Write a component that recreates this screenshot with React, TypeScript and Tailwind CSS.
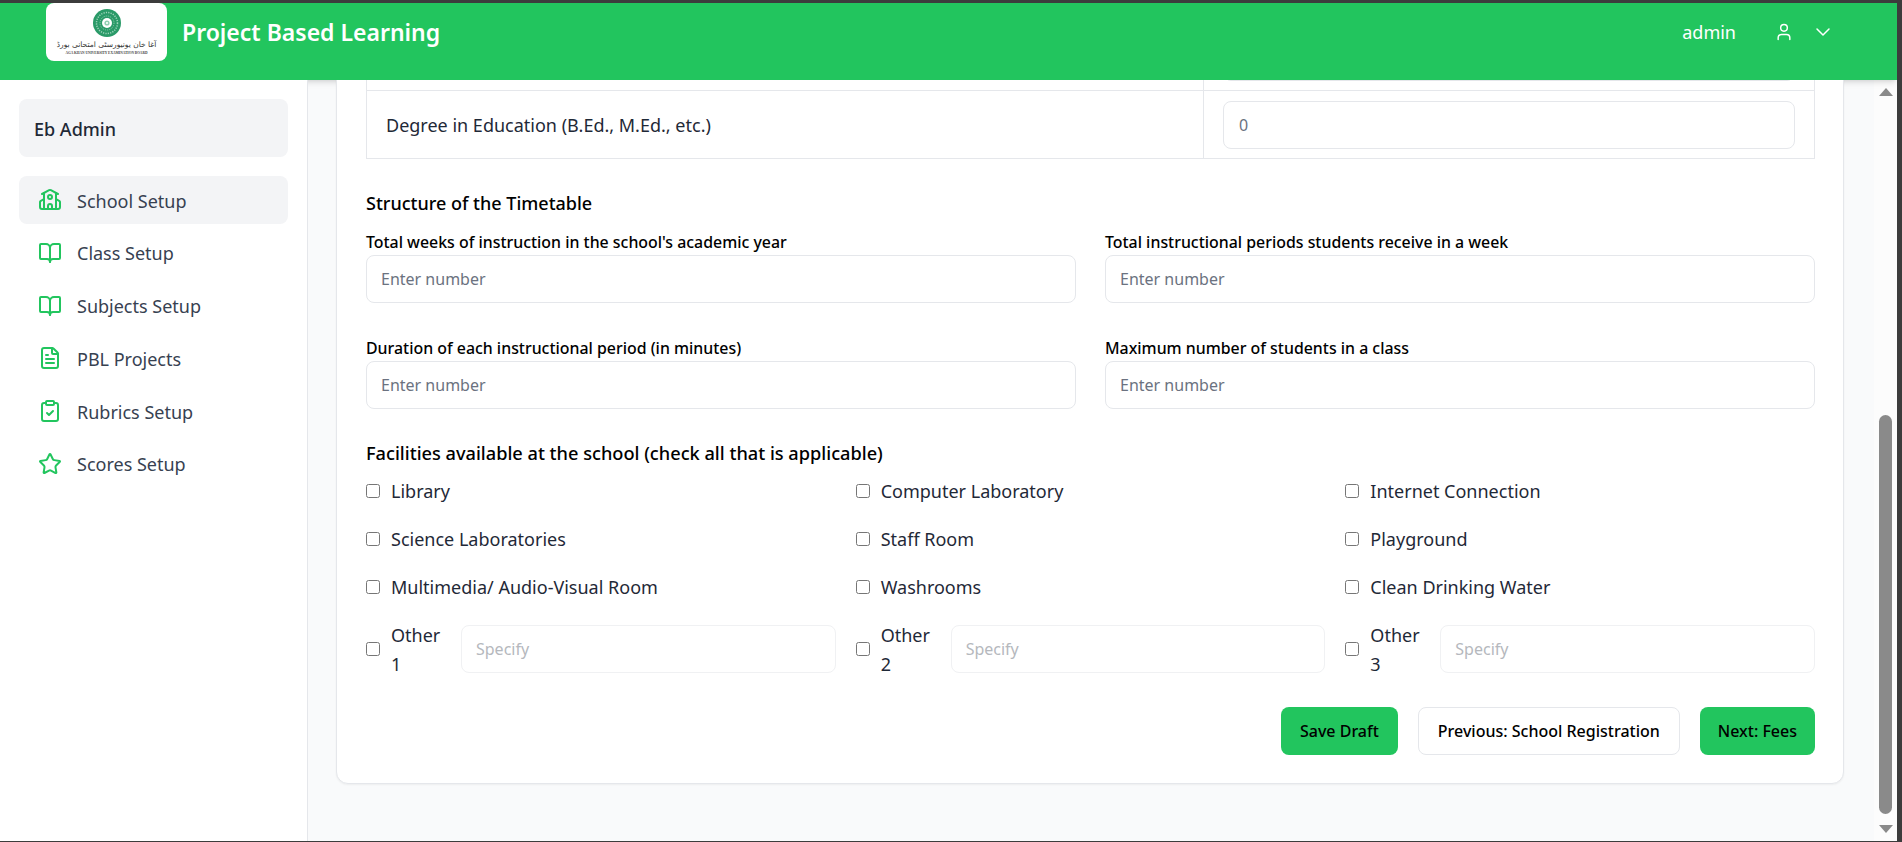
import { BookOpen, ChevronDown, ClipboardCheck, FileText, School, Star, User } from 'lucide-react';

const navItems = [
  { label: 'School Setup', icon: School, active: true },
  { label: 'Class Setup', icon: BookOpen },
  { label: 'Subjects Setup', icon: BookOpen },
  { label: 'PBL Projects', icon: FileText },
  { label: 'Rubrics Setup', icon: ClipboardCheck },
  { label: 'Scores Setup', icon: Star },
];

const facilityRows = [
  ['Library', 'Computer Laboratory', 'Internet Connection'],
  ['Science Laboratories', 'Staff Room', 'Playground'],
  ['Multimedia/ Audio-Visual Room', 'Washrooms', 'Clean Drinking Water'],
];

function Logo() {
  return (
    <div className="flex h-[58px] w-[121px] flex-col items-center overflow-hidden rounded-lg bg-white pt-[6px]">
      <svg width="28" height="28" viewBox="0 0 28 28" className="shrink-0">
        <circle cx="14" cy="14" r="14" fill="#2a9a68" />
        <circle cx="14" cy="14" r="10.5" fill="none" stroke="#9fd4bb" strokeWidth="1.5" strokeDasharray="1.2 1.2" />
        <circle cx="14" cy="14" r="7" fill="none" stroke="#8ccbae" strokeWidth="1" strokeDasharray="1 1" />
        <circle cx="14" cy="14" r="5" fill="#fff" />
        <circle cx="14" cy="14" r="2.6" fill="#8fcfb2" />
        <circle cx="14" cy="14" r="1.1" fill="#fff" />
      </svg>
      <div dir="rtl" className="mt-[2px] font-['DejaVu_Sans'] text-[7.5px] leading-[11px] whitespace-nowrap text-[#333]">
        آغا خان یونیورسٹی امتحانی بورڈ
      </div>
      <div className="font-['Liberation_Serif'] text-[3.5px] leading-[6px] font-bold whitespace-nowrap text-[#444]">
        AGA KHAN UNIVERSITY EXAMINATION BOARD
      </div>
    </div>
  );
}

function NumberField({ label }: { label: string }) {
  return (
    <div>
      <label className="mb-[3px] block text-[15.9px] leading-[20px] font-medium text-black">{label}</label>
      <input
        placeholder="Enter number"
        className="h-[48px] w-full rounded-lg border border-[#e5e7eb] bg-white px-[14px] text-[16px] placeholder:text-[#6b7280]"
      />
    </div>
  );
}

export default function App() {
  return (
    <div className="flex h-[842px] w-[1902px] flex-col overflow-hidden border-t-[3px] border-r-[5px] border-b border-[#3c3c3c] bg-white font-['Noto_Sans',sans-serif]">
      {/* Header */}
      <header className="relative z-10 flex h-[77px] shrink-0 items-start justify-between bg-[#22c55e] pr-[62px] pl-[46px] text-white shadow-md">
        <div className="flex items-center gap-[15px]">
          <Logo />
          <span className="text-[23px] leading-[58px] font-semibold">Project Based Learning</span>
        </div>
        <div className="flex h-[58px] items-center">
          <span className="mr-[38px] text-[18px]">admin</span>
          <User size={20} strokeWidth={1.75} className="mr-[17px]" />
          <ChevronDown size={24} strokeWidth={1.5} />
        </div>
      </header>

      <div className="flex min-h-0 flex-1">
        {/* Sidebar */}
        <aside className="relative z-20 w-[308px] shrink-0 border-r border-[#e5e7eb] bg-white px-[19px] pt-[19px]">
          <div className="mb-[19px] flex h-[58px] items-center rounded-lg bg-[#f3f4f6] px-[15px] text-[18px] font-medium text-[#1f2937]">
            <span className="translate-y-px">Eb Admin</span>
          </div>
          <nav className="flex flex-col gap-[4.8px]">
            {navItems.map((item) => {
              const Icon = item.icon;
              return (
                <a
                  key={item.label}
                  className={`flex h-[48px] items-center gap-[15px] rounded-lg px-[19px] text-[18px] text-[#374151] ${
                    item.active ? 'bg-[#f3f4f6]' : ''
                  }`}
                >
                  <Icon size={24} strokeWidth={2} className="text-[#22c55e]" />
                  <span className="translate-y-px">{item.label}</span>
                </a>
              );
            })}
          </nav>
        </aside>

        {/* Main */}
        <main className="min-w-0 flex-1 overflow-hidden bg-[#f9fafb] pr-[30px] pl-[28px]">
          <div className="relative z-20 -mt-[40px] rounded-b-xl border border-[#e5e7eb] bg-white pr-[28px] pb-[28px] pl-[29px] shadow-xs">
            <div className="border-x border-b border-[#e5e7eb]">
              <div className="flex h-[50px] border-b border-[#e5e7eb]">
                <div className="flex-1 border-r border-[#e5e7eb]" />
                <div className="w-[610px] px-[19px]">
                  <div className="h-[40px] rounded-b-lg border border-[#e5e7eb]" />
                </div>
              </div>
              <div className="flex h-[67px]">
                <div className="flex flex-1 items-center border-r border-[#e5e7eb] px-[19px] text-[18px] text-[#1f2937]">
                  <span className="translate-y-px">Degree in Education (B.Ed., M.Ed., etc.)</span>
                </div>
                <div className="flex w-[610px] items-center px-[19px]">
                  <input
                    placeholder="0"
                    className="h-[48px] w-full rounded-lg border border-[#e5e7eb] px-[15px] text-[16px] placeholder:text-[#6b7280]"
                  />
                </div>
              </div>
            </div>

            <h3 className="mt-[33px] text-[18px] leading-[22px] font-medium text-black">Structure of the Timetable</h3>
            <div className="mt-[18px] grid grid-cols-2 gap-x-[29px] gap-y-[35px]">
              <NumberField label="Total weeks of instruction in the school's academic year" />
              <NumberField label="Total instructional periods students receive in a week" />
              <NumberField label="Duration of each instructional period (in minutes)" />
              <NumberField label="Maximum number of students in a class" />
            </div>

            <h3 className="mt-[33px] text-[18.2px] leading-[22px] font-medium text-black">
              Facilities available at the school (check all that is applicable)
            </h3>
            <div className="mt-[15px] flex flex-col gap-[24px]">
              {facilityRows.map((row) => (
                <div key={row[0]} className="grid grid-cols-3 gap-x-[20px]">
                  {row.map((name) => (
                    <label key={name} className="flex h-[24px] items-center gap-[11px] text-[18px] text-[#1f2937]">
                      <input type="checkbox" className="h-[14px] w-[14px]" />
                      {name}
                    </label>
                  ))}
                </div>
              ))}
            </div>
            <div className="mt-[21px] grid grid-cols-3 gap-x-[20px]">
              {[1, 2, 3].map((n) => (
                <div key={n} className="flex items-center gap-[10px]">
                  <input type="checkbox" className="h-[14px] w-[14px] shrink-0" />
                  <span className="ml-[1px] w-[60px] shrink-0 translate-y-px text-[18px] leading-[29px] text-[#1f2937]">
                    Other {n}
                  </span>
                  <input
                    placeholder="Specify"
                    className="h-[48px] min-w-0 flex-1 rounded-lg border border-[#f0f1f3] px-[14px] text-[16px] placeholder:text-[#b5b8bd]"
                  />
                </div>
              ))}
            </div>

            <div className="mt-[29px] flex justify-end gap-[20px]">
              <button className="h-[48px] rounded-lg bg-[#22c55e] px-[19px] text-[16px] font-medium text-black">
                Save Draft
              </button>
              <button className="h-[48px] rounded-lg border border-[#e5e7eb] bg-white px-[19px] text-[16px] font-medium text-black">
                Previous: School Registration
              </button>
              <button className="h-[48px] rounded-lg bg-[#22c55e] px-[18px] text-[16px] font-medium text-black">
                Next: Fees
              </button>
            </div>
          </div>
        </main>

        {/* Scrollbar */}
        <div className="flex w-[23px] shrink-0 flex-col items-center bg-[#fcfcfc] py-[8px]">
          <div className="h-0 w-0 shrink-0 border-x-[7.5px] border-b-[8px] border-x-transparent border-b-[#8a8a8a]" />
          <div className="flex min-h-0 w-full flex-1 justify-center pt-[319px] pb-[11px]">
            <div className="h-full w-[13px] rounded-full bg-[#8a8a8a]" />
          </div>
          <div className="h-0 w-0 shrink-0 border-x-[7.5px] border-t-[8px] border-x-transparent border-t-[#8a8a8a]" />
        </div>
      </div>
    </div>
  );
}
